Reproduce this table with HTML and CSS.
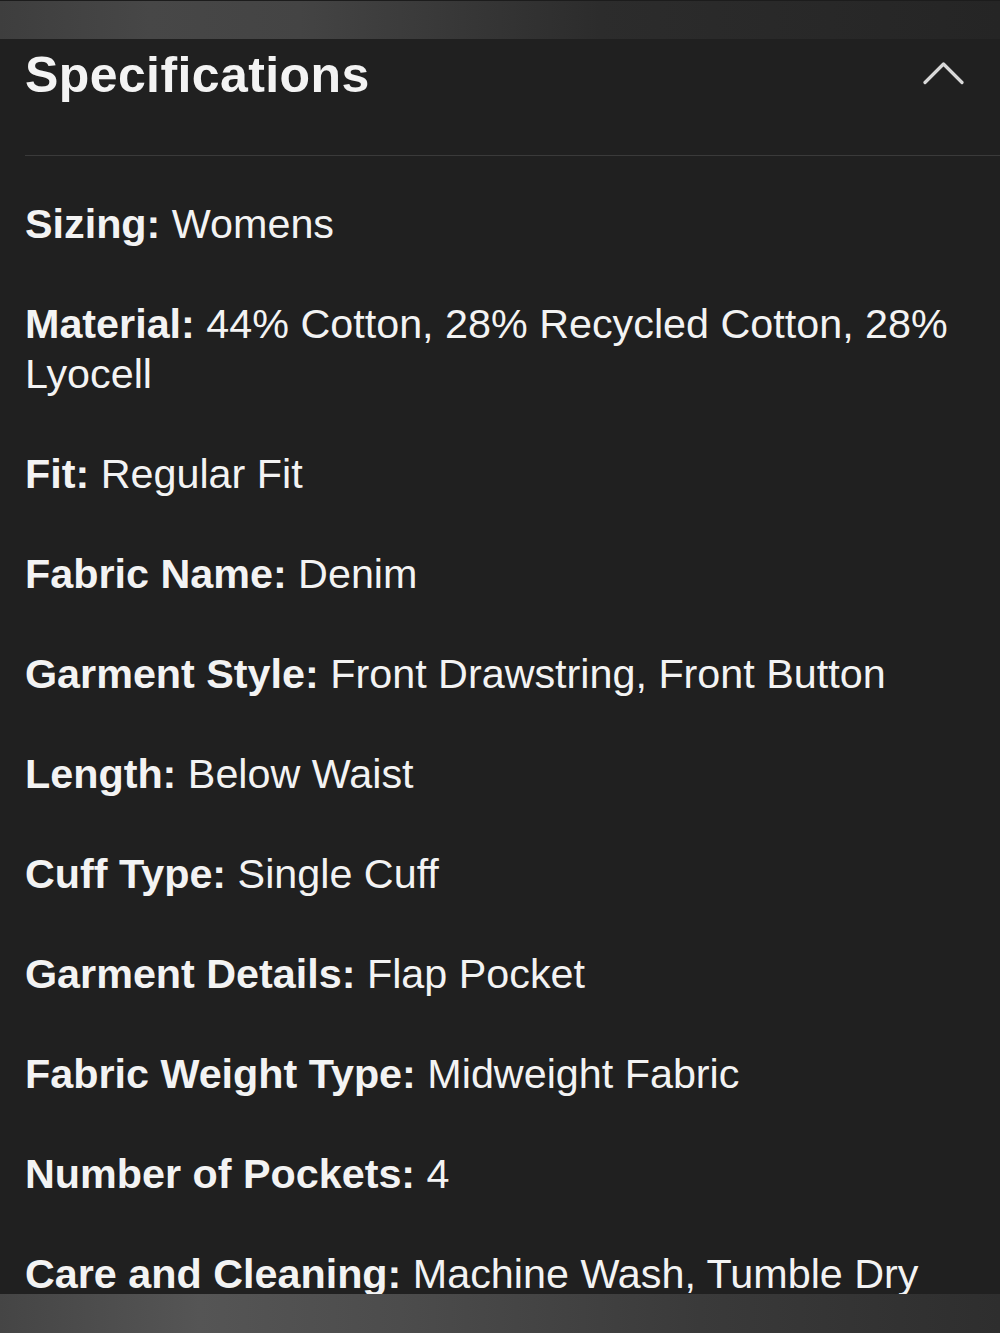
FILE: index.html
```html
<!DOCTYPE html>
<html>
<head>
<meta charset="utf-8">
<link rel="stylesheet" href="styles.css">
</head>
<body>
<div class="topbar"></div>
<section class="specs">
  <header class="specs-head">
    <h1 class="specs-title">Specifications</h1>
    <svg class="chevron" width="41" height="24" viewBox="0 0 41 24"><polyline points="2,21.5 20.5,3 39,21.5" fill="none" stroke="#d8d8d8" stroke-width="3.2" stroke-linecap="round" stroke-linejoin="round"/></svg>
  </header>
  <ul class="spec-list">
    <li><b>Sizing:</b> Womens</li>
    <li><b>Material:</b> 44% Cotton, 28% Recycled Cotton, 28% Lyocell</li>
    <li><b>Fit:</b> Regular Fit</li>
    <li><b>Fabric Name:</b> Denim</li>
    <li><b>Garment Style:</b> Front Drawstring, Front Button</li>
    <li><b>Length:</b> Below Waist</li>
    <li><b>Cuff Type:</b> Single Cuff</li>
    <li><b>Garment Details:</b> Flap Pocket</li>
    <li><b>Fabric Weight Type:</b> Midweight Fabric</li>
    <li><b>Number of Pockets:</b> 4</li>
    <li><b>Care and Cleaning:</b> Machine Wash, Tumble Dry</li>
  </ul>
</section>
<div class="bottombar"></div>
</body>
</html>
```
FILE: styles.css
```css
html, body {
  margin: 0;
  padding: 0;
  background: #202020;
  overflow: hidden;
}
body {
  font-family: "Liberation Sans", Arial, sans-serif;
  color: #f3f3f3;
  height: 1333px;
}
.topbar {
  height: 39px;
  background: linear-gradient(90deg, #3e3e3e 0%, #474747 15%, #444 30%, #2c2c2c 60%, #252525 100%);
  border-top: 1px solid #1c1c1c;
  box-sizing: border-box;
}
.specs-head {
  display: flex;
  justify-content: space-between;
  align-items: flex-start;
  margin-left: 25px;
  padding-top: 6px;
  height: 110px;
  border-bottom: 1px solid #3a3a3a;
}
.specs-title {
  margin: 0;
  font-size: 50px;
  line-height: 60px;
  font-weight: bold;
  letter-spacing: 0.4px;
}
.chevron {
  margin-top: 16px;
  margin-right: 36px;
}
.spec-list {
  list-style: none;
  margin: 0;
  padding: 43px 30px 0 25px;
}
.spec-list li {
  font-size: 41.3px;
  line-height: 50px;
  margin-bottom: 50px;
}
.spec-list b {
  font-weight: bold;
}
.bottombar {
  position: fixed;
  left: 0;
  right: 0;
  bottom: 0;
  height: 39px;
  background: linear-gradient(90deg, #454545 0%, #555 20%, #4c4c4c 40%, #3a3a3a 70%, #2e2e2e 100%);
}
```
